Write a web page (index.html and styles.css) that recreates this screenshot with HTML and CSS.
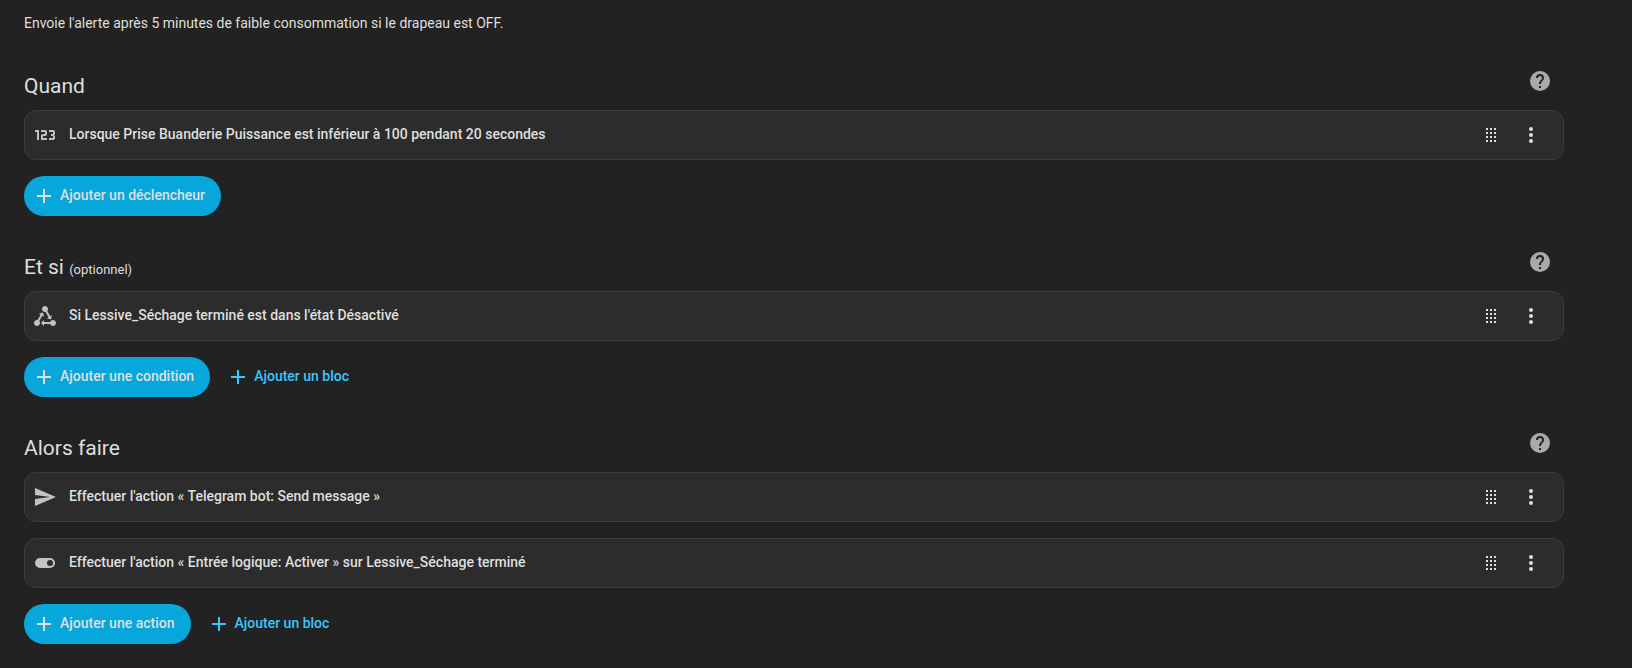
FILE: index.html
```
<!DOCTYPE html>
<html lang="fr">
  <head>
    <meta charset="UTF-8" />
    <meta name="viewport" content="width=device-width, initial-scale=1.0" />
    <title>Automatisation</title>
    <link rel="stylesheet" href="styles.css">
  </head>

  <body>
    <!-- shared icons -->
    <svg class="sprite" aria-hidden="true">
      <symbol id="help" viewBox="0 0 24 24">
        <path d="M15.07,11.25L14.17,12.17C13.45,12.89 13,13.5 13,15H11V14.5C11,13.39 11.45,12.39 12.17,11.67L13.41,10.41C13.78,10.05 14,9.55 14,9C14,7.89 13.1,7 12,7A2,2 0 0,0 10,9H8A4,4 0 0,1 12,5A4,4 0 0,1 16,9C16,9.88 15.64,10.67 15.07,11.25M13,19H11V17H13M12,2A10,10 0 0,0 2,12A10,10 0 0,0 12,22A10,10 0 0,0 22,12C22,6.47 17.5,2 12,2Z" />
      </symbol>
      <symbol id="drag" viewBox="0 0 24 24">
        <path d="M7 5h2v2H7zM11 5h2v2h-2zM15 5h2v2h-2zM7 9h2v2H7zM11 9h2v2h-2zM15 9h2v2h-2zM7 13h2v2H7zM11 13h2v2h-2zM15 13h2v2h-2zM7 17h2v2H7zM11 17h2v2h-2zM15 17h2v2h-2z" />
      </symbol>
      <symbol id="dots" viewBox="0 0 24 24">
        <path d="M12,16A2,2 0 0,1 14,18A2,2 0 0,1 12,20A2,2 0 0,1 10,18A2,2 0 0,1 12,16M12,10A2,2 0 0,1 14,12A2,2 0 0,1 12,14A2,2 0 0,1 10,12A2,2 0 0,1 12,10M12,4A2,2 0 0,1 14,6A2,2 0 0,1 12,8A2,2 0 0,1 10,6A2,2 0 0,1 12,4Z" />
      </symbol>
      <symbol id="plus" viewBox="0 0 24 24">
        <path d="M19,13H13V19H11V13H5V11H11V5H13V11H19V13Z" />
      </symbol>
      <symbol id="numeric" viewBox="0 0 24 24">
        <path d="M4,17V9H2V7H6V17H4M22,15C22,16.11 21.1,17 20,17H16V15H20V13H18V11H20V9H16V7H20A2,2 0 0,1 22,9V10.5A1.5,1.5 0 0,1 20.5,12A1.5,1.5 0 0,1 22,13.5V15M14,15V17H8V13C8,11.89 8.9,11 10,11H12V9H8V7H12A2,2 0 0,1 14,9V11C14,12.11 13.1,13 12,13H10V15H14Z" />
      </symbol>
      <symbol id="state" viewBox="0 0 24 24">
        <path d="M6.27 17.05C6.72 17.58 7 18.25 7 19C7 20.66 5.66 22 4 22S1 20.66 1 19 2.34 16 4 16C4.18 16 4.36 16 4.53 16.05L7.6 10.69L5.86 9.7L9.95 8.58L11.07 12.67L9.33 11.68L6.27 17.05M20 16C18.7 16 17.6 16.84 17.18 18H11V16L8 19L11 22V20H17.18C17.6 21.16 18.7 22 20 22C21.66 22 23 20.66 23 19S21.66 16 20 16M12 8C12.18 8 12.36 8 12.53 7.95L15.6 13.31L13.86 14.3L17.95 15.42L19.07 11.33L17.33 12.32L14.27 6.95C14.72 6.42 15 5.75 15 5C15 3.34 13.66 2 12 2S9 3.34 9 5 10.34 8 12 8Z" />
      </symbol>
      <symbol id="send" viewBox="0 0 24 24">
        <path d="M2,21L23,12L2,3V10L17,12L2,14V21Z" />
      </symbol>
      <symbol id="toggle" viewBox="0 0 24 24">
        <path d="M17,7H7A5,5 0 0,0 2,12A5,5 0 0,0 7,17H17A5,5 0 0,0 22,12A5,5 0 0,0 17,7M17,15A3,3 0 0,1 14,12A3,3 0 0,1 17,9A3,3 0 0,1 20,12A3,3 0 0,1 17,15Z" />
      </symbol>
    </svg>

    <main class="editor">
      <p class="description">Envoie l'alerte après 5 minutes de faible consommation si le drapeau est OFF.</p>

      <section class="section">
        <div class="header">
          <h2>Quand</h2>
          <a class="icon-button help" href="#" aria-label="Aide"><svg class="icon"><use href="#help" /></svg></a>
        </div>
        <div class="rows">
          <div class="card">
            <svg class="icon"><use href="#numeric" /></svg>
            <h3>Lorsque Prise Buanderie Puissance est inférieur à 100 pendant 20 secondes</h3>
            <button class="icon-button drag" aria-label="Déplacer"><svg class="icon"><use href="#drag" /></svg></button>
            <button class="icon-button" aria-label="Menu"><svg class="icon"><use href="#dots" /></svg></button>
          </div>
          <div class="buttons">
            <button class="button filled"><svg class="icon"><use href="#plus" /></svg><span>Ajouter un déclencheur</span></button>
          </div>
        </div>
      </section>

      <section class="section">
        <div class="header">
          <h2>Et si <span class="small">(optionnel)</span></h2>
          <a class="icon-button help" href="#" aria-label="Aide"><svg class="icon"><use href="#help" /></svg></a>
        </div>
        <div class="rows">
          <div class="card">
            <svg class="icon"><use href="#state" /></svg>
            <h3>Si Lessive_Séchage terminé est dans l'état Désactivé</h3>
            <button class="icon-button drag" aria-label="Déplacer"><svg class="icon"><use href="#drag" /></svg></button>
            <button class="icon-button" aria-label="Menu"><svg class="icon"><use href="#dots" /></svg></button>
          </div>
          <div class="buttons">
            <button class="button filled"><svg class="icon"><use href="#plus" /></svg><span>Ajouter une condition</span></button>
            <button class="button"><svg class="icon"><use href="#plus" /></svg><span>Ajouter un bloc</span></button>
          </div>
        </div>
      </section>

      <section class="section">
        <div class="header">
          <h2>Alors faire</h2>
          <a class="icon-button help" href="#" aria-label="Aide"><svg class="icon"><use href="#help" /></svg></a>
        </div>
        <div class="rows">
          <div class="card">
            <svg class="icon"><use href="#send" /></svg>
            <h3>Effectuer l'action « Telegram bot: Send message »</h3>
            <button class="icon-button drag" aria-label="Déplacer"><svg class="icon"><use href="#drag" /></svg></button>
            <button class="icon-button" aria-label="Menu"><svg class="icon"><use href="#dots" /></svg></button>
          </div>
          <div class="card">
            <svg class="icon"><use href="#toggle" /></svg>
            <h3>Effectuer l'action « Entrée logique: Activer » sur Lessive_Séchage terminé</h3>
            <button class="icon-button drag" aria-label="Déplacer"><svg class="icon"><use href="#drag" /></svg></button>
            <button class="icon-button" aria-label="Menu"><svg class="icon"><use href="#dots" /></svg></button>
          </div>
          <div class="buttons">
            <button class="button filled"><svg class="icon"><use href="#plus" /></svg><span>Ajouter une action</span></button>
            <button class="button"><svg class="icon"><use href="#plus" /></svg><span>Ajouter un bloc</span></button>
          </div>
        </div>
      </section>
    </main>
  </body>
</html>
```
FILE: styles.css
```
:root {
  --background: #222222;
  --card: #2c2c2c;
  --border: #3d3d3d;
  --text: #dfdfdf;
  --icon: #c3c3c3;
  --primary: #07a7db;
  --accent: #37c8fd;
}

* {
  box-sizing: border-box;
}

body {
  margin: 0;
  background: var(--background);
  color: var(--text);
  font-family: Roboto, sans-serif;
  font-size: 14px;
  line-height: 20px;
}

h2,
h3,
p {
  margin: 0;
}

.sprite {
  display: none;
}

.icon {
  flex: none;
  width: 24px;
  height: 24px;
  fill: currentColor;
}

.editor {
  display: flex;
  flex-direction: column;
  gap: 22px;
  padding: 13px 68px 24px 24px;
}

.description {
  margin-bottom: 2px;
}

.header {
  display: flex;
  justify-content: space-between;
  margin-bottom: 5px;
}

.header h2 {
  padding-top: 14px;
  font-size: 21px;
  font-weight: 400;
  line-height: 30px;
}

.header .small {
  font-size: 13px;
}

.rows {
  display: flex;
  flex-direction: column;
  gap: 16px;
}

.card {
  display: flex;
  align-items: center;
  min-height: 50px;
  padding: 0 8px;
  background: var(--card);
  border: 1px solid var(--border);
  border-radius: 12px;
}

.card > .icon {
  color: var(--icon);
}

.card h3 {
  flex: 1;
  padding: 0 12px 2px;
  font-size: 14px;
  font-weight: 500;
}

.icon-button {
  display: flex;
  justify-content: center;
  align-items: center;
  width: 48px;
  height: 48px;
  padding: 0;
  background: none;
  border: 0;
  color: inherit;
  cursor: pointer;
}

.drag {
  width: 32px;
  cursor: grab;
}

.help {
  color: #a9a9a9;
}

.buttons {
  display: flex;
  gap: 8px;
}

.button {
  display: flex;
  align-items: center;
  gap: 4px;
  height: 40px;
  padding: 0 16px 0 8px;
  background: none;
  border: 0;
  border-radius: 20px;
  color: var(--accent);
  font: inherit;
  font-weight: 500;
  cursor: pointer;
}

.button span {
  padding-bottom: 2px;
}

.filled {
  background: var(--primary);
  color: var(--text);
}
```
